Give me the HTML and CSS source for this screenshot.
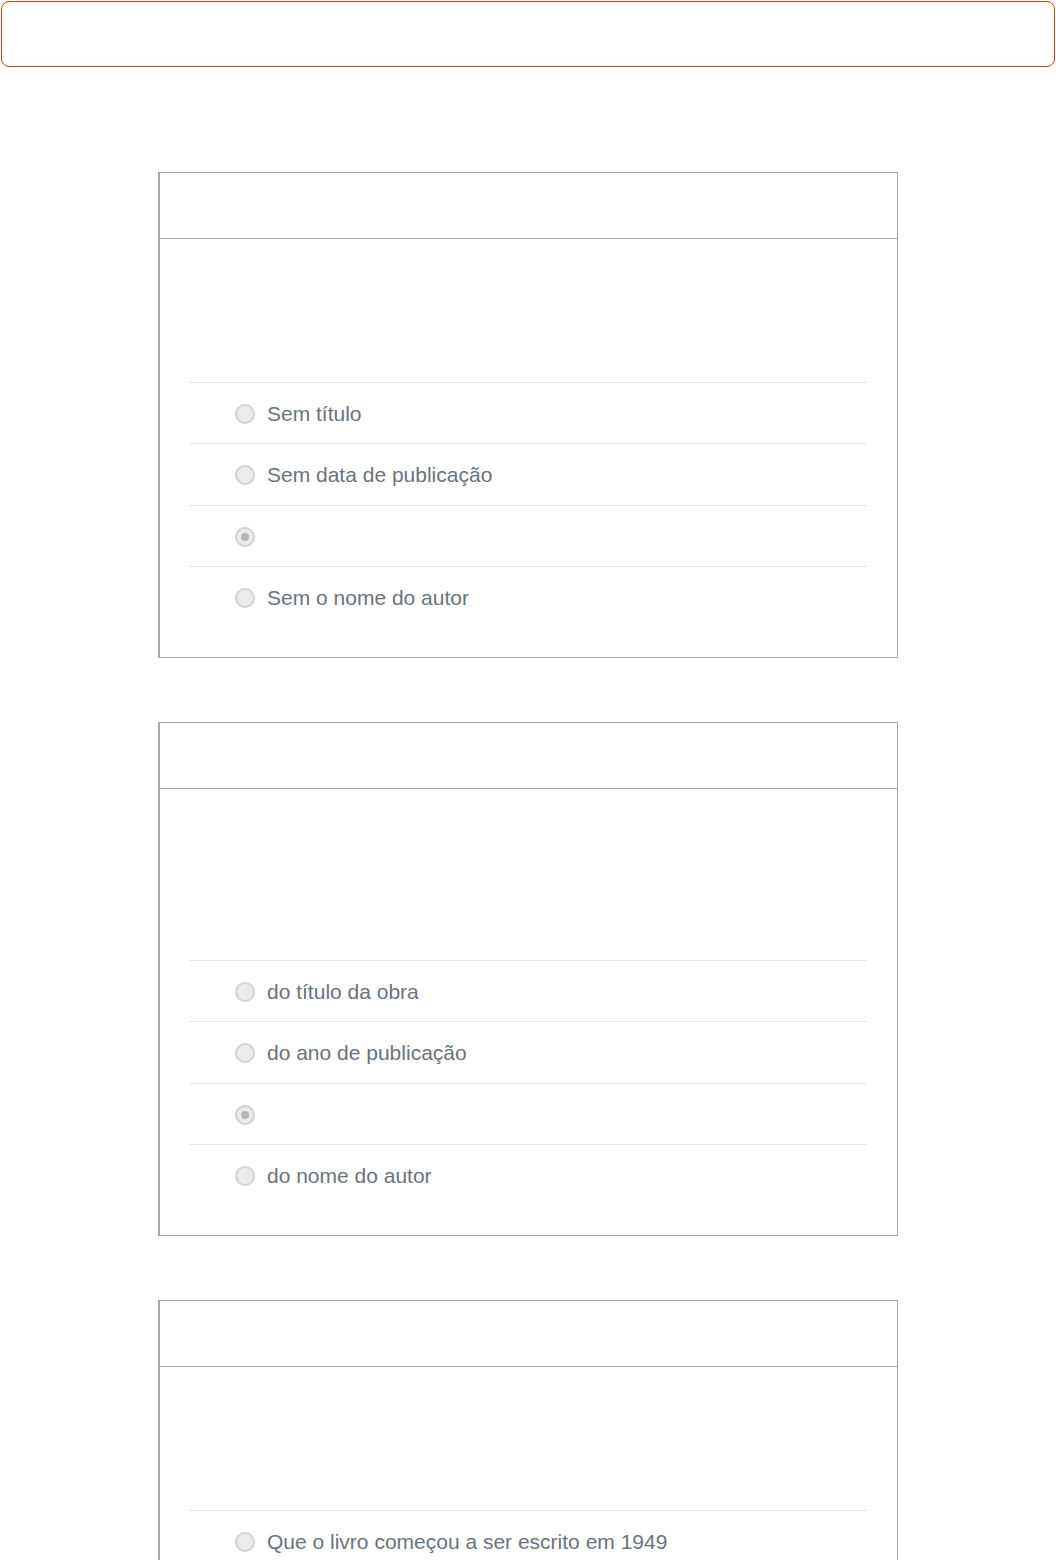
FILE: index.html
```html
<!DOCTYPE html>
<html lang="pt">
<head>
<meta charset="utf-8">
<title>Questionário</title>
<link rel="stylesheet" href="styles.css">
</head>
<body>
<div class="alert"></div>
<main class="quiz">
  <section class="card">
    <div class="card-header"></div>
    <div class="card-body">
      <div class="question q-short"></div>
      <ul class="options">
        <li class="option"><span class="radio"></span><span class="label">Sem título</span></li>
        <li class="option"><span class="radio"></span><span class="label">Sem data de publicação</span></li>
        <li class="option"><span class="radio checked"></span><span class="label"></span></li>
        <li class="option"><span class="radio"></span><span class="label">Sem o nome do autor</span></li>
      </ul>
    </div>
  </section>
  <section class="card">
    <div class="card-header"></div>
    <div class="card-body">
      <div class="question q-long"></div>
      <ul class="options">
        <li class="option"><span class="radio"></span><span class="label">do título da obra</span></li>
        <li class="option"><span class="radio"></span><span class="label">do ano de publicação</span></li>
        <li class="option"><span class="radio checked"></span><span class="label"></span></li>
        <li class="option"><span class="radio"></span><span class="label">do nome do autor</span></li>
      </ul>
    </div>
  </section>
  <section class="card">
    <div class="card-header"></div>
    <div class="card-body">
      <div class="question q-short"></div>
      <ul class="options">
        <li class="option"><span class="radio"></span><span class="label">Que o livro começou a ser escrito em 1949</span></li>
        <li class="option"></li>
      </ul>
    </div>
  </section>
</main>
</body>
</html>
```
FILE: styles.css
```css
* { box-sizing: border-box; }
html, body { margin: 0; padding: 0; background: #fff; }
body {
  font-family: "Liberation Sans", Arial, Helvetica, sans-serif;
  color: #6b737c;
}
.alert {
  margin: 1px 1px 0 1px;
  height: 66px;
  border: 1px solid #c9461c;
  border-radius: 8px;
}
.quiz {
  display: flex;
  flex-direction: column;
  align-items: center;
  gap: 64px;
  padding-top: 105px;
}
.card {
  width: 740px;
  border: 1px solid #a9a9a9;
  border-left-width: 2px;
  background: #fff;
}
.card-header {
  height: 65.5px;
  border-bottom: 1px solid #a9a9a9;
}
.card-body {
  padding: 0 30px 29.5px 29px;
}
.question.q-short { height: 143px; }
.question.q-long { height: 171px; }
.options {
  list-style: none;
  margin: 0;
  padding: 0;
}
.option {
  display: flex;
  align-items: center;
  gap: 12px;
  height: 61.5px;
  padding-left: 46px;
  padding-top: 2px;
  border-top: 1px solid #e6e6e6;
  font-size: 21px;
}
.radio {
  flex: none;
  width: 20px;
  height: 20px;
  border-radius: 50%;
  border: 2px solid #d2d2d2;
  background: #ebebeb;
  display: flex;
  align-items: center;
  justify-content: center;
}
.radio.checked::after {
  content: "";
  width: 8px;
  height: 8px;
  border-radius: 50%;
  background: #b5b5b5;
}
```
